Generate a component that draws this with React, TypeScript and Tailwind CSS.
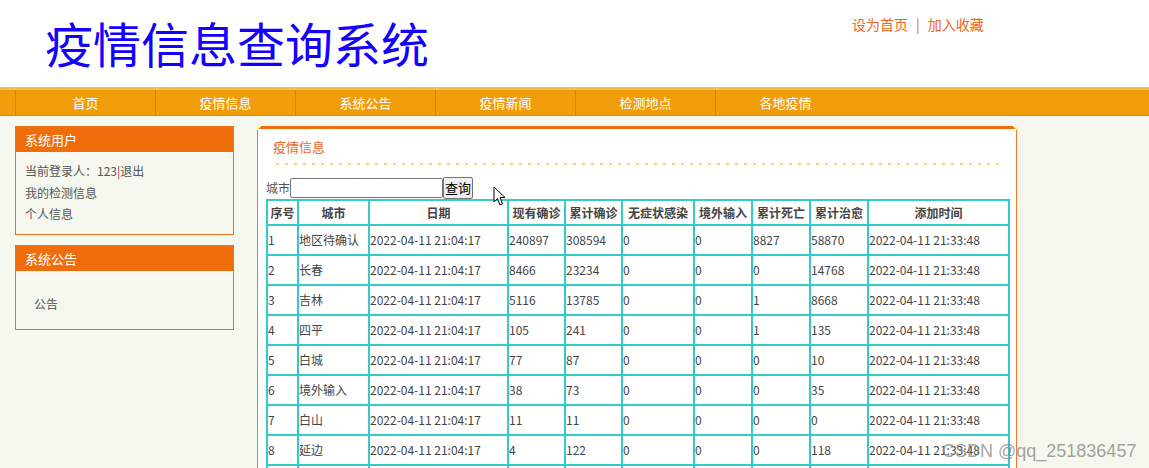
import React from "react"

// ── Data ────────────────────────────────────────────

const NAV = ['首页', '疫情信息', '系统公告', '疫情新闻', '检测地点', '各地疫情']

const HEAD = ['序号', '城市', '日期', '现有确诊', '累计确诊', '无症状感染', '境外输入', '累计死亡', '累计治愈', '添加时间']
const COLS = [31, 71, 139, 57, 57, 72, 58, 58, 58, 141]

const ROWS: (string | number)[][] = [
  [1, '地区待确认', 240897, 308594, 0, 0, 8827, 58870],
  [2, '长春', 8466, 23234, 0, 0, 0, 14768],
  [3, '吉林', 5116, 13785, 0, 0, 1, 8668],
  [4, '四平', 105, 241, 0, 0, 1, 135],
  [5, '白城', 77, 87, 0, 0, 0, 10],
  [6, '境外输入', 38, 73, 0, 0, 0, 35],
  [7, '白山', 11, 11, 0, 0, 0, 0],
  [8, '延边', 4, 122, 0, 0, 0, 118],
]

const FONT = 'font-["Microsoft_YaHei","Noto_Sans_CJK_SC",sans-serif]'

function SideBox({ title, children }: { title: string; children: React.ReactNode }) {
  return (
    <div className="border border-[#e8741a]">
      <div className="h-[25px] bg-[#ef6d0b] pl-[9px] text-[13px] leading-[25px] text-white">{title}</div>
      {children}
    </div>
  )
}

export default function App() {
  return (
    <div className={`relative min-h-[468px] bg-[#f6f8ef] ${FONT}`}>
      {/* ── Header ── */}
      <header className="flex h-[87px] bg-white">
        <h1 className="ml-[45px] mt-[10px] text-[48px] leading-[64px] font-normal text-[#1400ff]">疫情信息查询系统</h1>
        <div className="ml-[423px] mt-[14px] flex h-[20px] items-center text-[14px] text-[#f0641c]">
          <span>设为首页</span>
          <span className="mx-[8px]">|</span>
          <span>加入收藏</span>
        </div>
      </header>

      {/* ── Nav ── */}
      <nav className="flex h-[29px] border-t-[3px] border-b-[1px] border-t-[#f2bb55] border-b-[#e3860c] bg-[#f09c0b] pl-[15px]">
        {NAV.map(n => (
          <div key={n} className="w-[140px] border-l border-l-[#d1830f] text-center text-[13px] leading-[25px] text-white">
            {n}
          </div>
        ))}
      </nav>

      {/* ── Body ── */}
      <div className="flex pt-[10px]">
        <aside className="ml-[15px] flex w-[219px] flex-col gap-[10px]">
          <SideBox title="系统用户">
            <div className="flex h-[82px] flex-col pt-[8px] pl-[9px] text-[12px] leading-[21.5px] text-[#555]">
              <div>
                当前登录人：123<span className="text-[#7a3a6e]">|</span>退出
              </div>
              <div>我的检测信息</div>
              <div>个人信息</div>
            </div>
          </SideBox>
          <SideBox title="系统公告">
            <div className="h-[58px] pt-[24px] pl-[18px] text-[12px] leading-[18px] text-[#555]">公告</div>
          </SideBox>
        </aside>

        <main className="relative ml-[23px] h-[400px] w-[760px] border-x border-t-[3px] border-x-[#ef7a22] border-t-[#ef6d0b] bg-white">
          <div className="absolute -top-[3px] -left-px h-[4px] w-[6px] bg-[linear-gradient(135deg,#fff6a0_40%,transparent_41%)]" />
          <div className="absolute -top-[3px] -right-px h-[4px] w-[6px] bg-[linear-gradient(225deg,#fff6a0_40%,transparent_41%)]" />
          <div className="ml-[15px] mt-[8px] text-[13px] leading-[20px] text-[#f0641c]">疫情信息</div>
          <div className="mx-[15px] mt-[5px] h-[4px] w-[728px] bg-[radial-gradient(circle,#f5d27a_1.2px,transparent_1.5px)] bg-[length:9px_4px]" />

          <div className="mt-[10px] ml-[8px] flex h-[23px] items-center text-[12px] text-[#555]">
            <span>城市</span>
            <input className="h-[20px] w-[153px] rounded-[2px] border border-[#767676] bg-white" />
            <button className="h-[22px] w-[30px] rounded-[2px] border border-[#767676] bg-[#efefef] text-[13px] leading-[18px] text-black">查询</button>
          </div>

          <table className="ml-[8px] w-[742px] table-fixed border-collapse text-[12px]">
            <colgroup>
              {COLS.map((w, i) => (
                <col key={i} style={{ width: w }} />
              ))}
            </colgroup>
            <thead>
              <tr className="h-[25px]">
                {HEAD.map(h => (
                  <th key={h} className="border-2 border-[#33cccc] p-0 text-center font-bold text-[#444] whitespace-nowrap">
                    {h}
                  </th>
                ))}
              </tr>
            </thead>
            <tbody>
              {ROWS.map(r => (
                <tr key={r[0]} className="h-[30px]">
                  <td className="border-2 border-[#33cccc] px-0 text-[#444]">{r[0]}</td>
                  <td className="border-2 border-[#33cccc] px-0 text-[#444] whitespace-nowrap">{r[1]}</td>
                  <td className="border-2 border-[#33cccc] px-0 text-[#444] whitespace-nowrap">2022-04-11 21:04:17</td>
                  {r.slice(2).map((v, j) => (
                    <td key={j} className="border-2 border-[#33cccc] px-0 text-[#444]">{v}</td>
                  ))}
                  <td className="border-2 border-[#33cccc] px-0 text-[#444] whitespace-nowrap">2022-04-11 21:33:48</td>
                </tr>
              ))}
              <tr className="h-[30px]">
                {COLS.map((_, i) => (
                  <td key={i} className="border-2 border-[#33cccc] p-0" />
                ))}
              </tr>
            </tbody>
          </table>
        </main>
      </div>

      {/* mouse cursor */}
      <svg className="absolute left-[493px] top-[186px]" width="13" height="21" viewBox="0 0 13 21">
        <path d="M1 1 L1 16 L4.5 12.5 L7 19 L9.5 18 L7 11.5 L12 11.5 Z" fill="#fff" stroke="#000" strokeWidth="1" />
      </svg>

      {/* watermark */}
      <div className="absolute left-[942px] top-[438px] font-['Liberation_Sans',sans-serif] text-[18px] text-[#8a8a8a]/80">CSDN @qq_251836457</div>
    </div>
  )
}
